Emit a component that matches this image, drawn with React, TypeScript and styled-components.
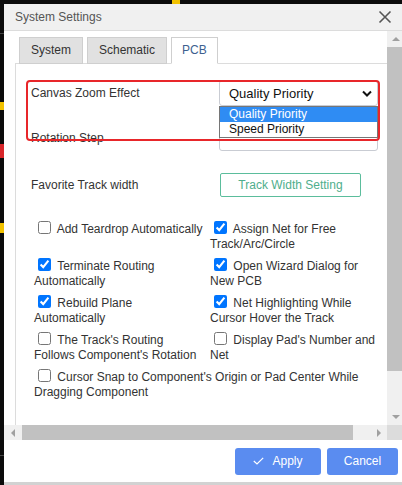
import styled, { createGlobalStyle } from "styled-components";

const GlobalStyle = createGlobalStyle`
    html, body {
        margin: 0;
        padding: 0;
        background: #0b0b0b;
        overflow: hidden;
    }
    body {
        font-family: "Liberation Sans", Arial, sans-serif;
        font-size: 12px;
        color: #333;
    }
`;

const Backdrop = styled.div`
    position: relative;
    width: 402px;
    height: 485px;
    overflow: hidden;
`;

const Mark = styled.span<{ $color: string }>`
    position: absolute;
    background: ${(p) => p.$color};
`;

const Dialog = styled.div`
    margin: 4px 0 0 4px;
    width: 400px;
    background: #fff;
    display: flex;
    flex-direction: column;
`;

const TitleBar = styled.div`
    height: 26px;
    background: #f0f0f0;
    border-bottom: 1px solid #dcdcdc;
    display: flex;
    align-items: center;
    justify-content: space-between;
    padding: 0 12px 0 11px;
    color: #555;
`;

const CloseButton = styled.span`
    display: flex;
    width: 14px;
    height: 14px;
`;

const Body = styled.div`
    height: 409px;
    display: grid;
    grid-template-columns: 383px 17px;
    grid-template-rows: 394px 15px;
`;

const Viewport = styled.div`
    overflow: hidden;
    padding: 6px 0 0 11px;
`;

const Tabs = styled.div`
    display: flex;
    gap: 4px;
    padding-left: 4px;
    margin-bottom: -1px;
    position: relative;
    z-index: 1;
`;

const Tab = styled.div<{ $active?: boolean }>`
    height: 25px;
    line-height: 25px;
    padding: 0 ${(p) => (p.$active ? 10 : 11)}px;
    border: 1px solid #cfcfcf;
    border-bottom-color: ${(p) => (p.$active ? "#fff" : "#cfcfcf")};
    background: ${(p) => (p.$active ? "#fff" : "#e1e1e1")};
    color: ${(p) => (p.$active ? "#3d5f8f" : "#333")};
`;

const Panel = styled.div`
    position: relative;
    width: 420px;
    height: 400px;
    border: 1px solid #dcdcdc;
    padding: 16px 0 0 15px;
    box-sizing: border-box;
`;

const Highlight = styled.div`
    position: absolute;
    left: 10px;
    top: 16px;
    width: 354px;
    height: 61px;
    border: 2px solid #e8262a;
    border-radius: 4px;
    box-sizing: border-box;
    z-index: 3;
    pointer-events: none;
`;

const FormRow = styled.div<{ $gap: number }>`
    display: flex;
    align-items: center;
    height: 26px;
    margin-bottom: ${(p) => p.$gap}px;
`;

const Label = styled.div`
    width: 188px;
`;

const SelectWrap = styled.div`
    position: relative;
    width: 159px;
    height: 26px;
`;

const SelectBox = styled.div`
    height: 26px;
    box-sizing: border-box;
    border: 1px solid #c9ccd3;
    border-radius: 3px;
    display: flex;
    align-items: center;
    justify-content: space-between;
    padding: 0 5px 0 9px;
    font-size: 13px;
    color: #111;
    background: #fff;
`;

const Options = styled.div`
    position: absolute;
    top: 26px;
    left: 0;
    width: 159px;
    box-sizing: border-box;
    border: 1px solid #767676;
    background: #fff;
    z-index: 2;
`;

const Option = styled.div<{ $selected?: boolean }>`
    height: 15px;
    line-height: 15px;
    padding-left: 9px;
    color: ${(p) => (p.$selected ? "#fff" : "#111")};
    background: ${(p) => (p.$selected ? "#2f8cf3" : "#fff")};
`;

const OutlineButton = styled.div`
    margin-left: 1px;
    width: 141px;
    height: 24px;
    box-sizing: border-box;
    border: 1px solid #5bbd9c;
    border-radius: 2px;
    color: #4fae8c;
    display: flex;
    align-items: center;
    justify-content: center;
`;

const CheckGrid = styled.div`
    display: grid;
    grid-template-columns: 176px 170px;
    row-gap: 6px;
    line-height: 15px;
    margin: 23px 0 0 3px;
`;

const CheckItem = styled.label<{ $wide?: boolean; $narrow?: boolean }>`
    grid-column: ${(p) => (p.$wide ? "1 / span 2" : "auto")};
    max-width: ${(p) => (p.$narrow ? "171px" : "none")};
`;

const Box = styled.input`
    width: 13px;
    height: 13px;
    margin: 0 3px 0 4px;
    vertical-align: -1px;
`;

const VScroll = styled.div`
    background: #f0f0f0;
    display: flex;
    flex-direction: column;
`;

const HScroll = styled.div`
    background: #f0f0f0;
    display: flex;
`;

const VArrow = styled.div<{ $h: number }>`
    flex: 0 0 ${(p) => p.$h}px;
    display: flex;
    align-items: center;
    justify-content: center;
`;

const HArrow = styled.div`
    flex: 0 0 17px;
    display: flex;
    align-items: center;
    justify-content: center;
`;

const Thumb = styled.div<{ $size: number; $offset?: number }>`
    flex: 0 0 ${(p) => p.$size}px;
    margin-left: ${(p) => p.$offset ?? 0}px;
    background: #c1c1c1;
`;

const Track = styled.div`
    flex: 1;
`;

const Corner = styled.div`
    background: #dcdcdc;
`;

const Footer = styled.div`
    height: 42px;
    border-bottom: 3px solid #d2d2d2;
    display: flex;
    align-items: center;
    justify-content: flex-end;
    gap: 6px;
    padding-right: 6px;
`;

const PrimaryButton = styled.div<{ $width: number }>`
    width: ${(p) => p.$width}px;
    height: 27px;
    border-radius: 3px;
    background: #5a8cf0;
    color: #fff;
    display: flex;
    align-items: center;
    justify-content: center;
    gap: 8px;
`;

const Chevron = () => (
    <svg width="10" height="7" viewBox="0 0 10 7">
        <path d="M1 1.5 L5 5.5 L9 1.5" fill="none" stroke="#111" strokeWidth="2" />
    </svg>
);

const Tri = ({ dir }: { dir: "up" | "down" | "left" | "right" }) => {
    const pts = {
        up: "0,4 4,0 8,4",
        down: "0,0 8,0 4,4",
        left: "4,0 4,8 0,4",
        right: "0,0 4,4 0,8",
    }[dir];
    const vertical = dir === "up" || dir === "down";
    return (
        <svg width={vertical ? 8 : 4} height={vertical ? 4 : 8}>
            <polygon points={pts} fill="#a0a0a0" />
        </svg>
    );
};

const checks: { text: string; checked: boolean; wide?: boolean; narrow?: boolean }[] = [
    { text: "Add Teardrop Automatically", checked: false },
    { text: "Assign Net for Free Track/Arc/Circle", checked: true },
    { text: "Terminate Routing Automatically", checked: true },
    { text: "Open Wizard Dialog for New PCB", checked: true },
    { text: "Rebuild Plane Automatically", checked: true, narrow: true },
    { text: "Net Highlighting While Cursor Hover the Track", checked: true },
    { text: "The Track's Routing Follows Component's Rotation", checked: false, narrow: true },
    { text: "Display Pad's Number and Net", checked: false },
    { text: "Cursor Snap to Component's Origin or Pad Center While Dragging Component", checked: false, wide: true },
];

function App() {
    return (
        <Backdrop>
            <GlobalStyle />
            <Mark $color="#f2c200" style={{ left: 172, top: 0, width: 8, height: 4 }} />
            <Mark $color="#f2c200" style={{ left: 0, top: 102, width: 4, height: 8 }} />
            <Mark $color="#d8262a" style={{ left: 0, top: 144, width: 4, height: 14 }} />
            <Mark $color="#f2c200" style={{ left: 0, top: 223, width: 4, height: 10 }} />
            <Mark $color="#444" style={{ left: 0, top: 33, width: 4, height: 1 }} />
            <Mark $color="#444" style={{ left: 0, top: 455, width: 4, height: 1 }} />
            <Dialog>
                <TitleBar>
                    System Settings
                    <CloseButton>
                        <svg width="14" height="14" viewBox="0 0 14 14">
                            <path d="M1.5 1.5 L12.5 12.5 M12.5 1.5 L1.5 12.5" stroke="#555" strokeWidth="1.6" />
                        </svg>
                    </CloseButton>
                </TitleBar>
                <Body>
                    <Viewport>
                        <Tabs>
                            <Tab>System</Tab>
                            <Tab>Schematic</Tab>
                            <Tab $active>PCB</Tab>
                        </Tabs>
                        <Panel>
                            <Highlight />
                            <FormRow $gap={19}>
                                <Label>Canvas Zoom Effect</Label>
                                <SelectWrap>
                                    <SelectBox>
                                        Quality Priority
                                        <Chevron />
                                    </SelectBox>
                                    <Options>
                                        <Option $selected>Quality Priority</Option>
                                        <Option>Speed Priority</Option>
                                    </Options>
                                </SelectWrap>
                            </FormRow>
                            <FormRow $gap={21}>
                                <Label>Rotation Step</Label>
                                <SelectWrap>
                                    <SelectBox />
                                </SelectWrap>
                            </FormRow>
                            <FormRow $gap={0}>
                                <Label>Favorite Track width</Label>
                                <OutlineButton>Track Width Setting</OutlineButton>
                            </FormRow>
                            <CheckGrid>
                                {checks.map((c) => (
                                    <CheckItem key={c.text} $wide={c.wide} $narrow={c.narrow}>
                                        <Box type="checkbox" defaultChecked={c.checked} /> {c.text}
                                    </CheckItem>
                                ))}
                            </CheckGrid>
                        </Panel>
                    </Viewport>
                    <VScroll>
                        <VArrow $h={16}>
                            <Tri dir="up" />
                        </VArrow>
                        <Thumb $size={324} />
                        <Track />
                        <VArrow $h={17}>
                            <Tri dir="down" />
                        </VArrow>
                    </VScroll>
                    <HScroll>
                        <HArrow>
                            <Tri dir="left" />
                        </HArrow>
                        <Thumb $size={331} $offset={1} />
                        <Track />
                        <HArrow>
                            <Tri dir="right" />
                        </HArrow>
                    </HScroll>
                    <Corner />
                </Body>
                <Footer>
                    <PrimaryButton $width={86}>
                        <svg width="11" height="8" viewBox="0 0 11 8">
                            <path d="M0.8 4 L4 7 L10.2 0.8" fill="none" stroke="#fff" strokeWidth="1.2" />
                        </svg>
                        Apply
                    </PrimaryButton>
                    <PrimaryButton $width={71}>Cancel</PrimaryButton>
                </Footer>
            </Dialog>
        </Backdrop>
    );
}

export default App;
